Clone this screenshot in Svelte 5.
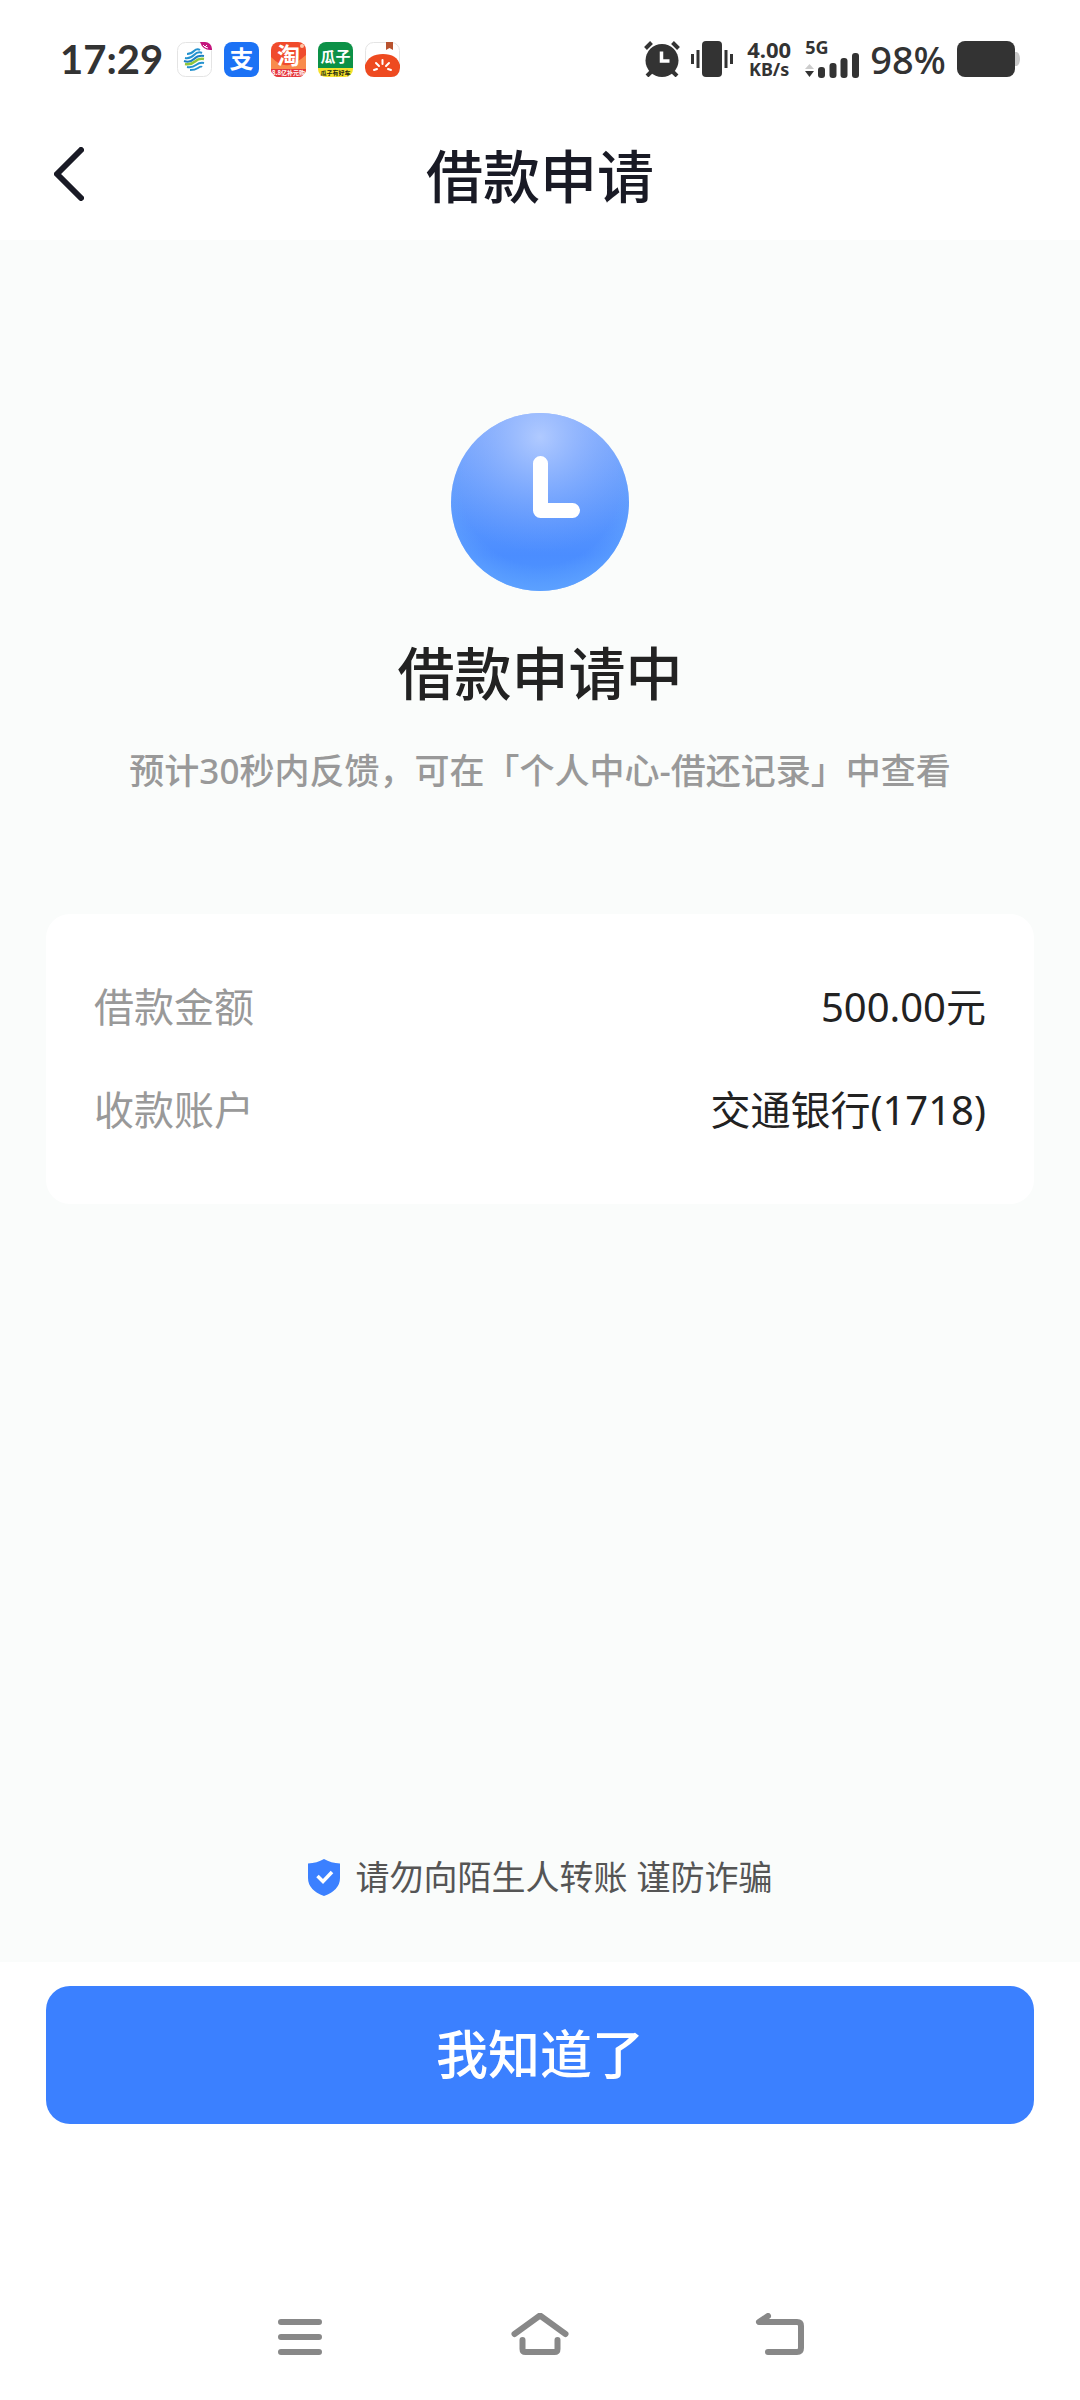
<script lang="ts">
    let rows = [
        { label: "借款金额", value: "500.00元" },
        { label: "收款账户", value: "交通银行(1718)" },
    ];
</script>


<svelte:head>
    <title>借款申请</title>
</svelte:head>

<div class="page">
    <div class="status">
        <span class="time">17:29</span>
        <div class="apps">
            <!-- china mobile -->
            <svg viewBox="0 0 35 35">
                <rect x="0.5" y="0.5" width="34" height="34" rx="8" fill="#fff" stroke="#e4e4e4" />
                <path d="M23 0h5a7 7 0 0 1 7 7v1q-9 1-12-8z" fill="#c4157d" />
                <path d="M26 3l2 2 2-2M28 5l3 1" fill="none" stroke="#fff" stroke-width="1" />
                <g fill="none" stroke-width="2">
                    <path d="M10 12q4 0 7-3t6-1" stroke="#2492cf" />
                    <path d="M8 16q5 1 9-3t8-2" stroke="#2492cf" />
                    <path d="M7 19q6 2 10-2t10-3" stroke="#1c7fc2" />
                    <path d="M8 22q6 1 10-2.500t9-2.500" stroke="#8fc63d" stroke-width="2.500" />
                    <path d="M10 25q5 1 9-2t8-2M13 28q5 0 8-2t4-1" stroke="#2492cf" />
                </g>
            </svg>
            <!-- alipay -->
            <svg viewBox="0 0 35 35">
                <rect width="35" height="35" rx="8" fill="#1c72f5" />
                <text x="17.500" y="26" font-size="24" font-weight="700" text-anchor="middle" fill="#fff">支</text>
            </svg>
            <!-- taobao -->
            <svg viewBox="0 0 35 35">
                <rect width="35" height="35" rx="8" fill="#f04b2c" />
                <path d="M0 15q10 10 18 8t17-10v14H0z" fill="#f98b4c" />
                <path d="M0 27h35a8 8 0 0 1-8 8H8a8 8 0 0 1-8-8z" fill="#e5353c" />
                <circle cx="31" cy="4" r="2" fill="#ffc8a8" />
                <text x="17.500" y="22" font-size="23" font-weight="700" text-anchor="middle" fill="#fff">淘</text>
                <text x="17.500" y="33" font-size="6" font-weight="700" text-anchor="middle" fill="#fff">8.8亿补元购</text>
            </svg>
            <!-- guazi -->
            <svg viewBox="0 0 35 35">
                <path d="M8 0h19a8 8 0 0 1 8 8v18H0V8a8 8 0 0 1 8-8z" fill="#0c9147" />
                <path d="M0 26h35v1a8 8 0 0 1-8 8H8a8 8 0 0 1-8-8z" fill="#f5e12c" />
                <text x="17.500" y="20" font-size="15" font-weight="700" text-anchor="middle" fill="#fff">瓜子</text>
                <text x="17.500" y="33" font-size="6" font-weight="700" text-anchor="middle" fill="#1d2a10">瓜子有好车</text>
            </svg>
            <!-- tomato novel -->
            <svg viewBox="0 0 35 35">
                <rect x="0.500" y="0.500" width="34" height="34" rx="8" fill="#fff" stroke="#e4e4e4" />
                <path d="M21 0h7v8l-3.500-2-3.500 2z" fill="#b8532f" />
                <path d="M0 23Q4 12 18 12t17 11v3q-1 9-9 9H9q-8 0-9-9z" fill="#ee4a20" />
                <path d="M9 28l3-1M11 21l3 3M17.500 18v4M24 21l-3 3M26 28l-3-1" stroke="#fff" stroke-width="2" stroke-linecap="round" />
            </svg>
        </div>

        <div class="system">
            <svg class="alarm" viewBox="0 0 36 36">
                <circle cx="18" cy="19.500" r="16.500" fill="#333" />
                <path d="M1.500 7.500l6-6M34.500 7.500l-6-6M7 31l-4 4M29 31l4 4" stroke="#333" stroke-width="4" />
                <path d="M17.500 10.500v9.500h8" fill="none" stroke="#fff" stroke-width="3.500" />
            </svg>
            <svg class="vibrate" viewBox="0 0 42 36">
                <rect x="11" width="20" height="36" rx="4" fill="#333" />
                <path d="M1.500 13v10M7 9v18M35 9v18M40.500 13v10" stroke="#333" stroke-width="3" />
            </svg>
            <div class="speed">
                <span>4.00</span>
                <span class="unit">KB/s</span>
            </div>
            <div class="network">
                <span>5G</span>
                <svg viewBox="0 0 54 25">
                    <path d="M0 16l4.500-5 4.500 5z" fill="#ccc" />
                    <path d="M0 18h9l-4.500 6z" fill="#333" />
                    <g fill="#333">
                        <rect x="13" y="14" width="7" height="11" rx="3" />
                        <rect x="24.500" y="10" width="7" height="15" rx="3" />
                        <rect x="35.500" y="5" width="7" height="20" rx="3" />
                        <rect x="47" y="0" width="7" height="25" rx="3" />
                    </g>
                </svg>
            </div>
            <span class="percent">98%</span>
            <svg class="battery" viewBox="0 0 63 36">
                <path d="M55 11h5q3 2 3 7t-3 7h-5z" fill="#c8c8c8" />
                <rect width="58" height="36" rx="8" fill="#333" />
            </svg>
        </div>
    </div>

    <header>
        <button class="back" aria-label="返回">
            <svg viewBox="0 0 30 54">
                <path d="M27 3L3 27l24 24" fill="none" stroke="#191a25" stroke-width="6" stroke-linecap="round" stroke-linejoin="round" />
            </svg>
        </button>
        <h1>借款申请</h1>
    </header>

    <main>
        <svg class="clock" viewBox="0 0 178 178">
            <defs>
                <linearGradient id="base" x1="0" y1="0" x2="0" y2="1">
                    <stop offset="0" stop-color="#82abfb" />
                    <stop offset="0.400" stop-color="#659dfd" />
                    <stop offset="0.800" stop-color="#4b8dff" />
                    <stop offset="1" stop-color="#4f97ff" />
                </linearGradient>
                <radialGradient id="shine" gradientUnits="userSpaceOnUse" cx="89" cy="24" r="115">
                    <stop offset="0" stop-color="#b0caff" />
                    <stop offset="1" stop-color="#78a2ff" stop-opacity="0" />
                </radialGradient>
                <radialGradient id="rim" gradientUnits="userSpaceOnUse" cx="89" cy="74" r="112">
                    <stop offset="0.700" stop-color="#62a5ff" stop-opacity="0" />
                    <stop offset="1" stop-color="#62a5ff" stop-opacity="0.900" />
                </radialGradient>
            </defs>
            <circle cx="89" cy="89" r="89" fill="url(#base)" />
            <circle cx="89" cy="89" r="89" fill="url(#shine)" />
            <circle cx="89" cy="89" r="89" fill="url(#rim)" />
            <path d="M89.500 50.500v47h32" fill="none" stroke="#fff" stroke-width="15" stroke-linecap="round" stroke-linejoin="round" />
        </svg>
        <h2>借款申请中</h2>
        <p class="hint">预计30秒内反馈，可在「个人中心-借还记录」中查看</p>

        <dl class="card">
            {#each rows as row}
                <div class="row">
                    <dt>{row.label}</dt>
                    <dd>{row.value}</dd>
                </div>
            {/each}
        </dl>

        <p class="notice">
            <svg viewBox="0 0 32 37">
                <path d="M16 0q7 4 16 4.500V19q0 12-16 18Q0 31 0 19V4.500Q9 4 16 0z" fill="#3b80ff" />
                <path d="M9.500 17l5.500 5.500 9-9.500" fill="none" stroke="#fff" stroke-width="3.500" />
            </svg>
            请勿向陌生人转账 谨防诈骗
        </p>
    </main>

    <footer>
        <button class="confirm">我知道了</button>
    </footer>

    <nav>
        <button aria-label="最近任务">
            <svg viewBox="0 0 60 48">
                <path d="M11 9h38M11 24h38M11 39h38" />
            </svg>
        </button>
        <button aria-label="主屏幕">
            <svg viewBox="0 0 60 48">
                <path d="M4.500 21L30 2.500 55.500 21M12.500 27v9q0 3 3 3h29q3 0 3-3v-9" />
            </svg>
        </button>
        <button aria-label="返回上一级">
            <svg viewBox="0 0 60 48">
                <path d="M18 3L9 9h38q4 0 4 4v22q0 4-4 4H18" />
            </svg>
        </button>
    </nav>
</div>


<style>
    :global(body) {
        margin: 0;
        background: #fff;
    }

    .page {
        min-height: 100vh;
        display: flex;
        flex-direction: column;
        font-family: "Noto Sans", "Noto Sans CJK SC", sans-serif;
        color: #222;
    }

    svg {
        display: block;
        flex: none;
    }

    button {
        border: 0;
        padding: 0;
        background: none;
        font-family: inherit;
        cursor: pointer;
    }

    h1, h2, p, dl, dd {
        margin: 0;
    }

    /* status bar */
    .status {
        height: 118px;
        padding: 0 60px;
        display: flex;
        align-items: center;
        color: #333;
    }

    .time {
        font-family: Lato, sans-serif;
        font-size: 40px;
        font-weight: 700;
    }

    .apps {
        margin-left: 14px;
        display: flex;
        gap: 12px;
    }

    .apps svg {
        width: 35px;
        height: 35px;
        overflow: visible;
    }

    .apps text {
        font-family: "Noto Sans CJK SC", sans-serif;
    }

    .system {
        margin-left: auto;
        display: flex;
        align-items: center;
        gap: 11px;
    }

    .alarm {
        width: 36px;
        height: 36px;
    }

    .vibrate {
        width: 42px;
        height: 36px;
    }

    .speed {
        margin-left: 3px;
        display: flex;
        flex-direction: column;
        align-items: center;
        font-size: 22px;
        font-weight: 700;
        line-height: 20px;
    }

    .unit {
        font-size: 18px;
    }

    .network {
        margin-left: 3px;
        font-size: 18px;
        font-weight: 700;
        line-height: 12px;
    }

    .network span {
        display: block;
    }

    .network svg {
        width: 54px;
        height: 25px;
    }

    .percent {
        font-size: 38px;
        font-weight: 500;
    }

    .battery {
        width: 63px;
        height: 36px;
    }

    /* title bar */
    header {
        height: 112px;
        padding: 0 54px 10px;
        display: grid;
        grid-template-columns: 1fr auto 1fr;
        align-items: center;
    }

    .back {
        justify-self: start;
    }

    .back svg {
        width: 30px;
        height: 54px;
    }

    h1, h2 {
        font-size: 57px;
        font-weight: 500;
        line-height: 64px;
    }

    h1 {
        padding-top: 4px;
        color: #191a25;
    }

    main {
        flex: 1;
        padding: 173px 46px 61px;
        display: flex;
        flex-direction: column;
        align-items: center;
        background: #fafcfb;
    }

    .clock {
        width: 178px;
        height: 178px;
    }

    h2 {
        margin-top: 50px;
    }

    .hint {
        margin-top: 42px;
        font-size: 35px;
        font-weight: 500;
        line-height: 48px;
        color: #999;
    }

    .card {
        align-self: stretch;
        margin-top: 119px;
        padding: 65px 48px 66px;
        display: flex;
        flex-direction: column;
        gap: 47px;
        background: #fff;
        border-radius: 24px;
    }

    .row {
        display: flex;
        justify-content: space-between;
        font-size: 40px;
        line-height: 56px;
    }

    dt {
        color: #999;
    }

    .notice {
        margin-top: auto;
        display: flex;
        align-items: center;
        gap: 16px;
        font-size: 34px;
        line-height: 48px;
        color: #555;
    }

    .notice svg {
        width: 32px;
        height: 37px;
    }

    footer {
        padding: 24px 46px 150px;
    }

    .confirm {
        width: 100%;
        height: 138px;
        padding-bottom: 8px;
        border-radius: 24px;
        background: #3b80ff;
        color: #fff;
        font-size: 52px;
        font-weight: 500;
    }

    nav {
        height: 126px;
        display: flex;
        justify-content: center;
        gap: 180px;
    }

    nav button {
        align-self: center;
    }

    nav svg {
        width: 60px;
        height: 48px;
        fill: none;
        stroke: #888;
        stroke-width: 6px;
        stroke-linecap: round;
        stroke-linejoin: round;
    }
</style>
